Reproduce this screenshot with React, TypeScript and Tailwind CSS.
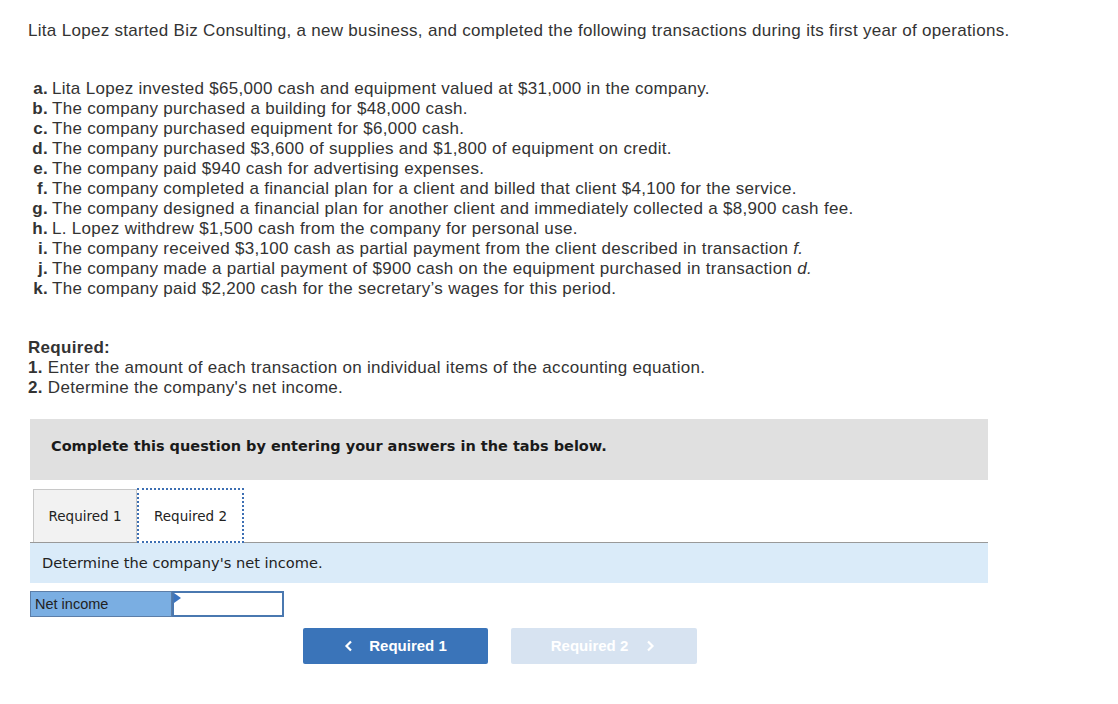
import React from "react";

const items: [string, React.ReactNode][] = [
  ["a.", "Lita Lopez invested $65,000 cash and equipment valued at $31,000 in the company."],
  ["b.", "The company purchased a building for $48,000 cash."],
  ["c.", "The company purchased equipment for $6,000 cash."],
  ["d.", "The company purchased $3,600 of supplies and $1,800 of equipment on credit."],
  ["e.", "The company paid $940 cash for advertising expenses."],
  ["f.", "The company completed a financial plan for a client and billed that client $4,100 for the service."],
  ["g.", "The company designed a financial plan for another client and immediately collected a $8,900 cash fee."],
  ["h.", "L. Lopez withdrew $1,500 cash from the company for personal use."],
  ["i.", <>The company received $3,100 cash as partial payment from the client described in transaction <i>f.</i></>],
  ["j.", <>The company made a partial payment of $900 cash on the equipment purchased in transaction <i>d.</i></>],
  ["k.", "The company paid $2,200 cash for the secretary’s wages for this period."],
];

export default function App() {
  return (
    <div className="w-[1118px] h-[704px] bg-white text-[#333] pl-[28px] pt-[20px]" style={{ fontFamily: "'Liberation Sans', Arial, sans-serif" }}>
      <div className="text-[17px] tracking-[0.3px]">
        <p className="leading-[22px]">
          Lita Lopez started Biz Consulting, a new business, and completed the following transactions during its first year of operations.
        </p>
        <div className="mt-[37px] leading-[20px]">
          {items.map(([l, t]) => (
            <div key={l} className="flex">
              <span className="w-[20px] text-right font-bold shrink-0">{l}</span>
              <span className="ml-[4px]">{t}</span>
            </div>
          ))}
        </div>
        <div className="mt-[39px] leading-[20px]">
          <div className="font-bold">Required:</div>
          <div><b>1.</b> Enter the amount of each transaction on individual items of the accounting equation.</div>
          <div><b>2.</b> Determine the company's net income.</div>
        </div>
      </div>
      <div className="ml-[2px] w-[958px] mt-[21px]" style={{ fontFamily: "'DejaVu Sans', Verdana, sans-serif" }}>
        <div className="h-[61px] bg-[#e0e0e0] flex items-center pb-[6px] pl-[21px] text-[14.5px] font-bold text-[#1a1a1a]">
          Complete this question by entering your answers in the tabs below.
        </div>
        <div className="mt-[8px] flex items-end border-b border-[#999]">
          <div className="ml-[3px] w-[104px] h-[53px] bg-[#f2f2f2] border border-b-0 border-[#c8c8c8] flex items-center justify-center text-[13.5px] text-[#222]">
            Required 1
          </div>
          <div className="w-[107px] h-[55px] bg-white border-2 border-dotted border-[#3d6fb3] -mb-[1px] flex items-center justify-center pt-[1px] text-[13.5px] text-[#222]">
            Required 2
          </div>
        </div>
        <div className="h-[40px] bg-[#daebf9] flex items-center pl-[12px] text-[14.6px] text-[#222]">
          Determine the company's net income.
        </div>
        <div className="mt-[8px] flex h-[26px]">
          <div className="w-[142px] bg-[#7aaee2] border border-[#5c7ea8] flex items-center pl-[4px] pt-[1px] text-[14.5px] text-[#222]" style={{ fontFamily: "'Liberation Sans', Arial, sans-serif" }}>
            Net income
          </div>
          <div className="relative w-[112px] bg-white border-2 border-[#4a78b0]">
            <div className="absolute left-0 top-0 w-0 h-0 border-t-[5px] border-b-[5px] border-l-[7px] border-t-transparent border-b-transparent border-l-[#3a74c0]" />
          </div>
        </div>
      </div>
      <div className="mt-[11px] ml-[275px] flex gap-[23px]" style={{ fontFamily: "'Liberation Sans', Arial, sans-serif" }}>
        <button className="w-[185px] h-[36px] rounded-[2px] bg-[#3a74b9] text-white text-[15px] font-bold flex items-center justify-center gap-[15px]">
          <svg width="10" height="12" viewBox="0 0 10 12"><path d="M7 1.5 L2.5 6 L7 10.5" stroke="white" strokeWidth="2.2" fill="none" /></svg>
          <span>Required 1</span>
        </button>
        <button className="w-[186px] h-[36px] rounded-[2px] bg-[#d7e3f1] text-white text-[15px] font-bold flex items-center justify-center gap-[17px] pr-[2px]">
          <span>Required 2</span>
          <svg width="10" height="12" viewBox="0 0 10 12"><path d="M3 1.5 L7.5 6 L3 10.5" stroke="white" strokeWidth="2.2" fill="none" /></svg>
        </button>
      </div>
    </div>
  );
}
